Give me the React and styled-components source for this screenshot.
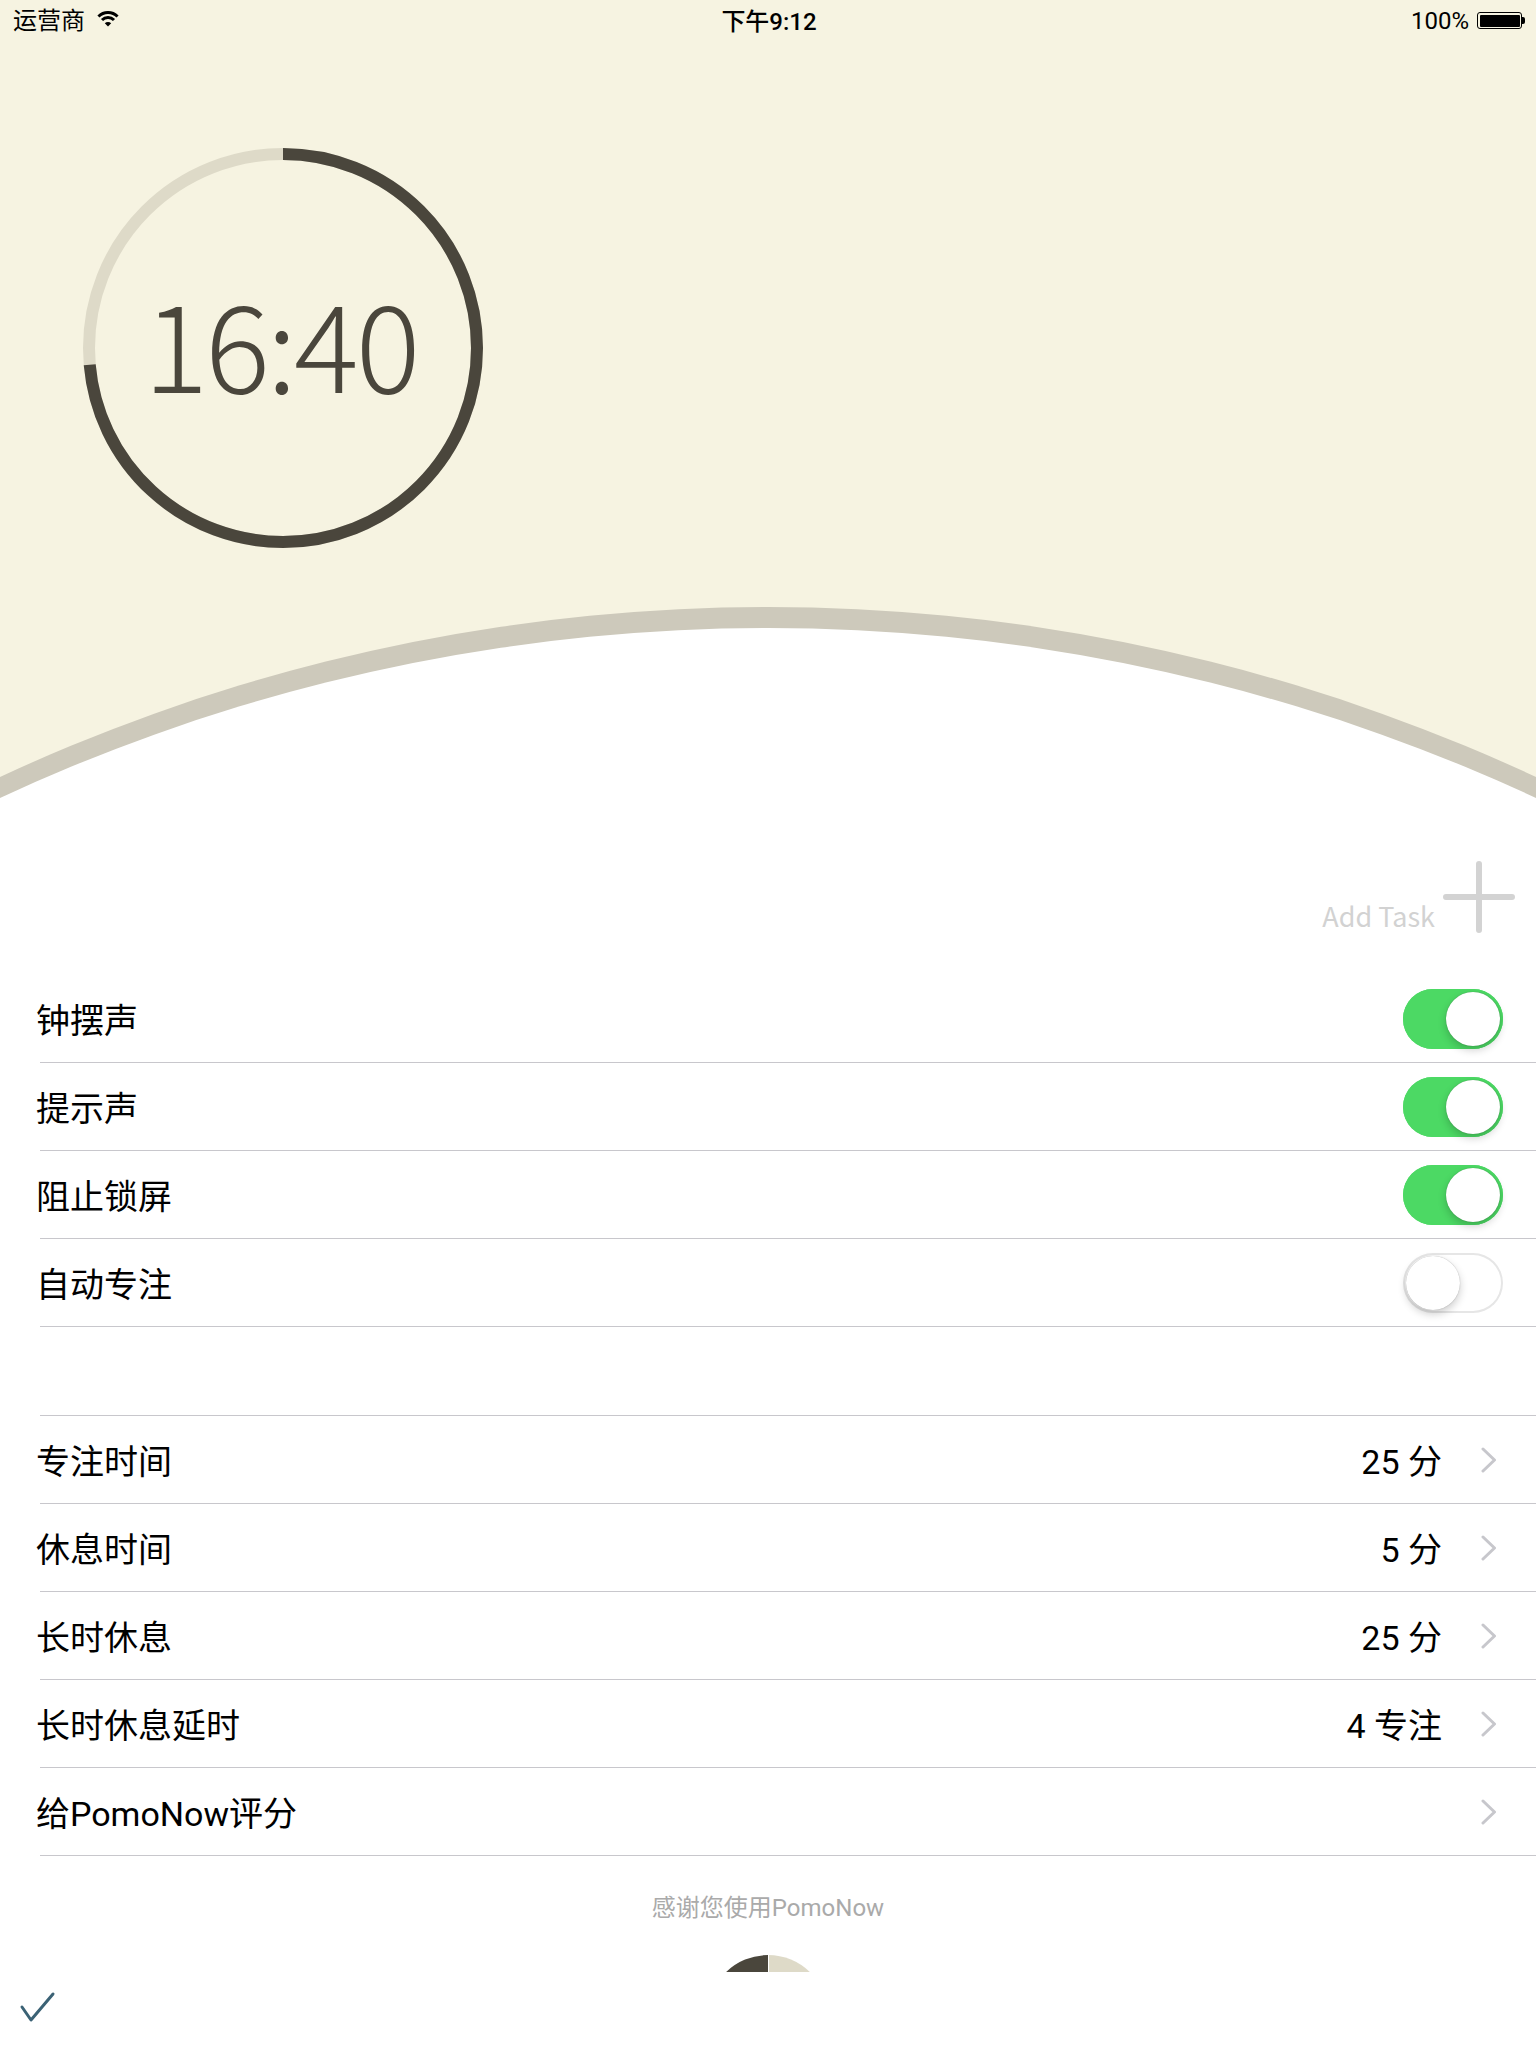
import React from "react";
import styled, { createGlobalStyle } from "styled-components";

const GlobalStyle = createGlobalStyle`
  html, body { margin: 0; padding: 0; background: #fff; }
  body {
    font-family: Roboto, "Noto Sans CJK SC", sans-serif;
    -webkit-font-smoothing: antialiased;
  }
  * { box-sizing: border-box; }
`;

const BEIGE = "#f6f3e1";
const DARK = "#4a463c";
const LIGHT = "#dedac8";

const Screen = styled.div`
  width: 1536px;
  height: 2048px;
  display: flex;
  flex-direction: column;
  overflow: hidden;
  background: #fff;
`;

const Top = styled.header`
  flex: none;
  background: ${BEIGE};
`;

const StatusBar = styled.div`
  height: 40px;
  display: grid;
  grid-template-columns: 1fr auto 1fr;
  align-items: center;
  padding: 0 11px 0 13px;
  font-size: 24px;
  color: #000;
`;

const Carrier = styled.div`
  display: flex;
  align-items: center;
  gap: 11px;
  margin-bottom: 4px;
`;

const Clock = styled.div`
  font-weight: 500;
  margin-bottom: 2px;
`;

const BatteryGroup = styled.div`
  display: flex;
  justify-content: flex-end;
  align-items: center;
  gap: 8px;
  margin-top: 1px;
`;

const Battery = styled.div`
  display: flex;
  align-items: center;
`;

const BatteryBody = styled.div`
  width: 45px;
  height: 17px;
  border: 1.5px solid #000;
  border-radius: 3px;
  padding: 1.5px;
`;

const BatteryFill = styled.div`
  width: 100%;
  height: 100%;
  background: #000;
  border-radius: 1px;
`;

const BatteryNub = styled.div`
  width: 3px;
  height: 7px;
  background: #000;
  border-radius: 0 2px 2px 0;
`;

const Hero = styled.section`
  height: 560px;
  padding: 108px 0 0 83px;
`;

const TimerDial = styled.div`
  width: 400px;
  height: 400px;
  display: grid;
  place-items: center;
  & > * {
    grid-area: 1 / 1;
  }
`;

const TimeLabel = styled.div`
  font-family: "Noto Sans CJK SC", Lato, sans-serif;
  font-weight: 300;
  font-size: 121px;
  letter-spacing: -3px;
  line-height: 1;
  color: ${DARK};
  padding: 0 0 16px 0;
  margin-right: 5px;
`;

const Curve = styled.svg`
  display: block;
  width: 1536px;
  height: 200px;
`;

const Content = styled.main`
  flex: 1;
  min-height: 0;
  overflow: hidden;
  background: #fff;
`;

const AddTaskBar = styled.div`
  display: flex;
  justify-content: flex-end;
  align-items: flex-end;
  gap: 8px;
  padding: 61px 21px 0 0;
  margin-bottom: 42px;
`;

const AddTaskText = styled.span`
  font-family: "Noto Sans CJK SC", sans-serif;
  font-size: 27px;
  line-height: 27px;
  color: #d2d2d2;
  margin-bottom: 4px;
`;

const Group = styled.section`
  margin-top: ${(p) => (p.$gap ? "88px" : "0")};
  margin-left: 40px;
  border-top: ${(p) => (p.$bordered ? "1px solid #c8c7cc" : "none")};
`;

const Row = styled.div`
  height: 88px;
  display: flex;
  align-items: center;
  padding-right: 33px;
  border-bottom: 1px solid #c8c7cc;
  font-size: 34px;
  color: #000;
`;

const Label = styled.span`
  flex: 1;
  margin-left: -4px;
`;

const Value = styled.span`
  font-size: 34px;
`;

const Chevron = styled.svg`
  width: 16px;
  height: 26px;
  margin: 0 6px 0 39px;
  flex: none;
`;

const Track = styled.div`
  width: 100px;
  height: 60px;
  border-radius: 30px;
  padding: 3px;
  display: flex;
  justify-content: ${(p) => (p.$on ? "flex-end" : "flex-start")};
  background: ${(p) => (p.$on ? "#4cd964" : "#fff")};
  box-shadow: inset 0 0 0 ${(p) => (p.$on ? "30px #4cd964" : "2px #e6e6e6")};
`;

const Knob = styled.div`
  width: 54px;
  height: 54px;
  border-radius: 50%;
  background: #fff;
  box-shadow: 0 4px 8px rgba(0, 0, 0, 0.2), 0 0 1px rgba(0, 0, 0, 0.35);
`;

const Footer = styled.div`
  margin-top: 37px;
  text-align: center;
  font-size: 24px;
  line-height: 30px;
  color: #aaa;
`;

const Pie = styled.div`
  width: 120px;
  height: 120px;
  margin: 32px auto 0;
  border-radius: 50%;
  background: linear-gradient(to right, ${DARK} 0 50%, #fff 50% calc(50% + 1px), ${LIGHT} calc(50% + 1px) 100%);
`;

const BottomBar = styled.footer`
  flex: none;
  height: 76px;
  display: flex;
  align-items: center;
  padding-left: 16px;
  background: #fff;
`;

function Toggle({ on }) {
  return (
    <Track $on={on}>
      <Knob />
    </Track>
  );
}

function ChevronIcon() {
  return (
    <Chevron viewBox="0 0 16 26">
      <polyline points="2,2 13.5,13 2,24" fill="none" stroke="#c7c7cc" strokeWidth="3" strokeLinecap="round" strokeLinejoin="round" />
    </Chevron>
  );
}

function WifiIcon() {
  const c = 12, cy = 16;
  const arc = (r) => {
    const d = r * 0.7071;
    return `M${c - d},${cy - d} A${r},${r} 0 0 1 ${c + d},${cy - d}`;
  };
  return (
    <svg width="24" height="17" viewBox="0 0 24 17">
      <path d={arc(13.5)} fill="none" stroke="#000" strokeWidth="3" />
      <path d={arc(8.5)} fill="none" stroke="#000" strokeWidth="3" />
      <path d={`M12,16.5 L8.8,13.2 A4.6,4.6 0 0 1 15.2,13.2 Z`} fill="#000" />
    </svg>
  );
}

function Ring({ fraction }) {
  const r = 194;
  const circ = 2 * Math.PI * r;
  return (
    <svg width="400" height="400" viewBox="0 0 400 400">
      <circle cx="200" cy="200" r={r} fill="none" stroke={LIGHT} strokeWidth="12" />
      <circle
        cx="200"
        cy="200"
        r={r}
        fill="none"
        stroke={DARK}
        strokeWidth="12"
        strokeDasharray={`${circ * fraction} ${circ}`}
        transform="rotate(-90 200 200)"
      />
    </svg>
  );
}

const toggles = [
  { label: "钟摆声", on: true },
  { label: "提示声", on: true },
  { label: "阻止锁屏", on: true },
  { label: "自动专注", on: false },
];

const settings = [
  { label: "专注时间", value: "25 分" },
  { label: "休息时间", value: "5 分" },
  { label: "长时休息", value: "25 分" },
  { label: "长时休息延时", value: "4 专注" },
  { label: "给PomoNow评分", value: "" },
];

export default function App() {
  return (
    <>
      <GlobalStyle />
      <Screen>
        <Top>
          <StatusBar>
            <Carrier>
              <span>运营商</span>
              <WifiIcon />
            </Carrier>
            <Clock>下午9:12</Clock>
            <BatteryGroup>
              <span>100%</span>
              <Battery>
                <BatteryBody>
                  <BatteryFill />
                </BatteryBody>
                <BatteryNub />
              </Battery>
            </BatteryGroup>
          </StatusBar>
          <Hero>
            <TimerDial>
              <Ring fraction={0.736} />
              <TimeLabel>16:40</TimeLabel>
            </TimerDial>
          </Hero>
          <Curve viewBox="0 0 1536 200">
            <circle cx="768" cy="1827" r="1820" fill="#cdc9bb" />
            <circle cx="768" cy="1848" r="1820" fill="#fff" />
          </Curve>
        </Top>
        <Content>
          <AddTaskBar>
            <AddTaskText>Add Task</AddTaskText>
            <svg width="72" height="72" viewBox="0 0 72 72">
              <path d="M36 3 V69 M3 36 H69" stroke="#d3d3d3" strokeWidth="6" strokeLinecap="round" />
            </svg>
          </AddTaskBar>
          <Group>
            {toggles.map((t) => (
              <Row key={t.label}>
                <Label>{t.label}</Label>
                <Toggle on={t.on} />
              </Row>
            ))}
          </Group>
          <Group $gap $bordered>
            {settings.map((s) => (
              <Row key={s.label}>
                <Label>{s.label}</Label>
                {s.value && <Value>{s.value}</Value>}
                <ChevronIcon />
              </Row>
            ))}
          </Group>
          <Footer>感谢您使用PomoNow</Footer>
          <Pie />
        </Content>
        <BottomBar>
          <svg width="40" height="40" viewBox="0 0 40 40">
            <polyline points="6,17 15,30 37,4" fill="none" stroke="#3b6275" strokeWidth="3" strokeLinecap="round" strokeLinejoin="round" />
          </svg>
        </BottomBar>
      </Screen>
    </>
  );
}
